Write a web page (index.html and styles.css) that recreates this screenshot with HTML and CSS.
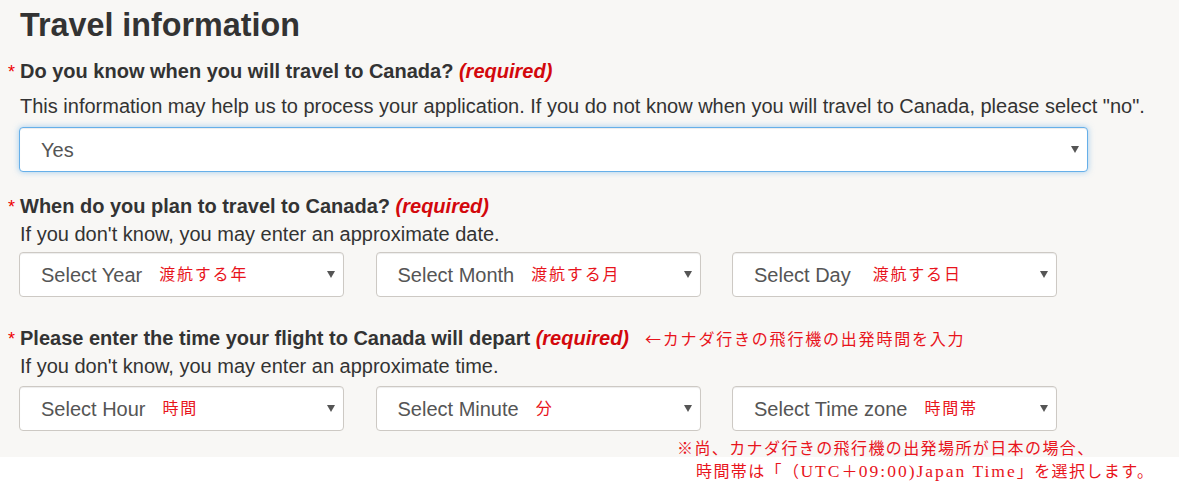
FILE: index.html
```html
<!DOCTYPE html>
<html lang="en">
<head>
    <meta charset="UTF-8">
    <title>Travel information</title>
    <link rel="stylesheet" href="styles.css">
</head>
<body>

<section class="panel">
    <h2 class="panel-title">Travel information</h2>

    <!-- travel date known? -->
    <div class="field field-known">
        <div class="field-label"><span class="req-mark">*</span>Do you know when you will travel to Canada? <em class="required">(required)</em></div>
        <p class="field-help help-known">This information may help us to process your application. If you do not know when you will travel to Canada, please select "no".</p>
        <div class="select-box select-wide is-focused">
            <span class="select-text">Yes</span>
            <span class="caret"></span>
        </div>
    </div>

    <!-- travel date -->
    <div class="field field-date">
        <div class="field-label"><span class="req-mark">*</span>When do you plan to travel to Canada? <em class="required">(required)</em></div>
        <p class="field-help help-date">If you don't know, you may enter an approximate date.</p>
        <div class="select-row row-date">
            <div class="select-box">
                <span class="select-text">Select Year</span>
                <span class="select-note">渡航する年</span>
                <span class="caret"></span>
            </div>
            <div class="select-box">
                <span class="select-text">Select Month</span>
                <span class="select-note">渡航する月</span>
                <span class="caret"></span>
            </div>
            <div class="select-box select-day">
                <span class="select-text">Select Day</span>
                <span class="select-note">渡航する日</span>
                <span class="caret"></span>
            </div>
        </div>
    </div>

    <!-- departure time -->
    <div class="field field-time">
        <div class="field-label"><span class="req-mark">*</span>Please enter the time your flight to Canada will depart <em class="required">(required)</em><span class="label-note">←カナダ行きの飛行機の出発時間を入力</span></div>
        <p class="field-help help-time">If you don't know, you may enter an approximate time.</p>
        <div class="select-row row-time">
            <div class="select-box">
                <span class="select-text">Select Hour</span>
                <span class="select-note">時間</span>
                <span class="caret"></span>
            </div>
            <div class="select-box">
                <span class="select-text">Select Minute</span>
                <span class="select-note">分</span>
                <span class="caret"></span>
            </div>
            <div class="select-box">
                <span class="select-text">Select Time zone</span>
                <span class="select-note">時間帯</span>
                <span class="caret"></span>
            </div>
        </div>
    </div>
</section>

<!-- 注意書き (パネルからはみ出す書き込み) -->
<div class="tz-note">
    <div class="tz-note-line">※尚、カナダ行きの飛行機の出発場所が日本の場合、</div>
    <div class="tz-note-line tz-note-line2">時間帯は「（<span class="latin">UTC</span>＋<span class="latin">09:00)Japan Time</span>」を選択します。</div>
</div>

</body>
</html>
```

FILE: styles.css
```css
body {
    position: relative;       /* tz-noteの基準 */
    min-height: 503px;
    margin: 0;
    background-color: #fff;
    font-family: "Liberation Sans", Arial, "Noto Sans CJK JP", sans-serif;
    color: #333;
}

/* 薄いグレーのパネル */
.panel {
    height: 457px;
    box-sizing: border-box;
    padding: 7px 0 0 8px;
    background-color: #f8f7f5;
}

.panel-title {
    margin: 0 0 0 12px;
    font-size: 32.3px;
    line-height: 36px;
    font-weight: bold;
}

/* ラベル */
.field-label {
    padding-left: 12px;
    font-size: 20px;
    line-height: 24px;
    font-weight: bold;
    white-space: nowrap;
}

.req-mark {
    display: inline-block;
    width: 12px;
    margin-left: -12px;
    color: #e00;
    font-weight: normal;
    font-size: 18px;
}

.required {
    color: #d3080c;
    font-style: italic;
}

.field-help {
    margin: 0 0 0 12px;
    font-size: 20px;
    line-height: 24px;
    white-space: nowrap;
}

/* 縦の間隔 */
.field-known { margin-top: 16px; }
.help-known  { margin-top: 10px; }
.field-date  { margin-top: 22px; }
.help-date   { margin-top: 3px; }
.field-time  { margin-top: 29px; }
.help-time   { margin-top: 3px; }

/* セレクト */
.select-box {
    display: flex;
    align-items: center;
    width: 325px;
    height: 45px;
    box-sizing: border-box;
    padding: 0 8px 0 21px;
    border: 1px solid #cdc9c4;
    border-radius: 4px;
    background-color: #fff;
    box-shadow: inset 0 1px 1px rgba(0, 0, 0, .075);
    font-size: 20px;
    line-height: 24px;
    color: #555;
}

.select-wide {
    width: 1069px;
    margin: 9px 0 0 11px;
}

.select-box.is-focused {
    border-color: #66afe9;
    box-shadow: inset 0 1px 1px rgba(0, 0, 0, .075), 0 0 6px rgba(102, 175, 233, .6);
}

.select-row {
    display: flex;
    gap: 31.5px;
    margin-left: 11px;
}

.row-date { margin-top: 6px; }
.row-time { margin-top: 8px; }

.caret {
    margin: 0 0 0 auto;
    width: 0;
    height: 0;
    border-left: 4px solid transparent;
    border-right: 4px solid transparent;
    border-top: 7px solid #555;
}

/* 赤い書き込み */
.select-note,
.label-note,
.tz-note {
    font-family: "Noto Sans CJK JP", sans-serif;
    font-weight: normal;
    color: #e8141c;
    letter-spacing: 1.8px;
    text-spacing-trim: space-all;
}

.select-note {
    margin-left: 17px;
    font-size: 16px;
    margin-top: -4px;
}

.select-day .select-note {
    margin-left: 22px;
}

.label-note {
    margin-left: 16px;
    font-size: 16px;
}

.tz-note {
    position: absolute;
    z-index: 1;
    left: 677px;
    top: 436px;
    font-size: 16px;
    line-height: 23px;
    letter-spacing: 1.4px;
}

.tz-note-line {
    white-space: nowrap;
}

.tz-note-line2 {
    margin-left: 19px;
}

.tz-note .latin {
    font-family: "Liberation Serif", serif;
    font-size: 17.5px;
    letter-spacing: 2px;
}
```
